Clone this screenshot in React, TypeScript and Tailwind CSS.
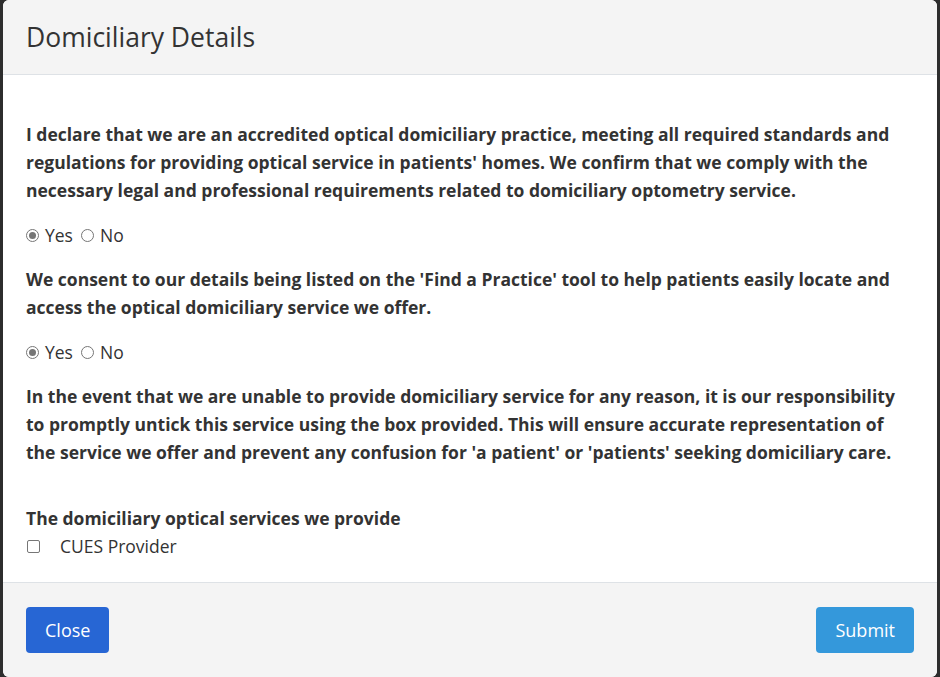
import React, { useState } from 'react';

const Radio = ({ checked, label, onClick }: { checked: boolean; label: string; onClick: () => void }) => (
  <label className="flex items-center cursor-pointer" onClick={onClick}>
    <span className="flex h-[13px] w-[13px] items-center justify-center rounded-full border border-[#767676] bg-white">
      {checked && <span className="h-[7px] w-[7px] rounded-full bg-[#767676]" />}
    </span>
    <span className="ml-[6px]">{label}</span>
  </label>
);

const App: React.FC = () => {
  const [q1, setQ1] = useState(true);
  const [q2, setQ2] = useState(true);
  const [cues, setCues] = useState(false);

  return (
    <div className="h-[677px] w-[940px] bg-[#2d2d2d] px-[3px] font-['Open_Sans',sans-serif] text-[#212529]">
      <div className="flex h-full flex-col overflow-hidden rounded-[6px] bg-white">
        {/* Header */}
        <div className="flex h-[75px] items-center border-b border-[#dee2e6] bg-[#f4f4f4] px-[23px]">
          <h2 className="text-[26.5px] leading-none text-[#333]">Domiciliary Details</h2>
        </div>

        {/* Body */}
        <div className="flex-1 px-[23px] pt-[45px] text-[17.5px] text-[#333]">
          <p className="font-bold leading-[28px]">
            I declare that we are an accredited optical domiciliary practice, meeting all required standards and
            regulations for providing optical service in patients' homes. We confirm that we comply with the
            necessary legal and professional requirements related to domiciliary optometry service.
          </p>
          <div className="mt-[19px] flex gap-[8px] leading-[24px]">
            <Radio checked={q1} label="Yes" onClick={() => setQ1(true)} />
            <Radio checked={!q1} label="No" onClick={() => setQ1(false)} />
          </div>

          <p className="mt-[18px] font-bold leading-[28px]">
            We consent to our details being listed on the 'Find a Practice' tool to help patients easily locate and
            access the optical domiciliary service we offer.
          </p>
          <div className="mt-[19px] flex gap-[8px] leading-[24px]">
            <Radio checked={q2} label="Yes" onClick={() => setQ2(true)} />
            <Radio checked={!q2} label="No" onClick={() => setQ2(false)} />
          </div>

          <p className="mt-[18px] font-bold leading-[28px]">
            In the event that we are unable to provide domiciliary service for any reason, it is our responsibility
            to promptly untick this service using the box provided. This will ensure accurate representation of
            the service we offer and prevent any confusion for 'a patient' or 'patients' seeking domiciliary care.
          </p>

          <h4 className="mt-[38px] font-bold leading-[28px]">The domiciliary optical services we provide</h4>
          <label className="flex items-center leading-[28px]" onClick={() => setCues(!cues)}>
            <span className="ml-[1px] flex h-[13px] w-[13px] items-center justify-center rounded-[2px] border border-[#767676] bg-white text-[10px] leading-none">
              {cues ? '✓' : ''}
            </span>
            <span className="ml-[20px]">CUES Provider</span>
          </label>
        </div>

        {/* Footer */}
        <div className="flex h-[95px] items-center justify-between border-t border-[#dee2e6] bg-[#f4f4f4] px-[23px]">
          <button className="h-[46px] rounded-[4px] bg-[#2766d4] px-[19px] text-[18px] text-white">Close</button>
          <button className="h-[46px] rounded-[4px] bg-[#3498db] px-[19px] text-[18px] text-white">Submit</button>
        </div>
      </div>
    </div>
  );
};

export default App;
